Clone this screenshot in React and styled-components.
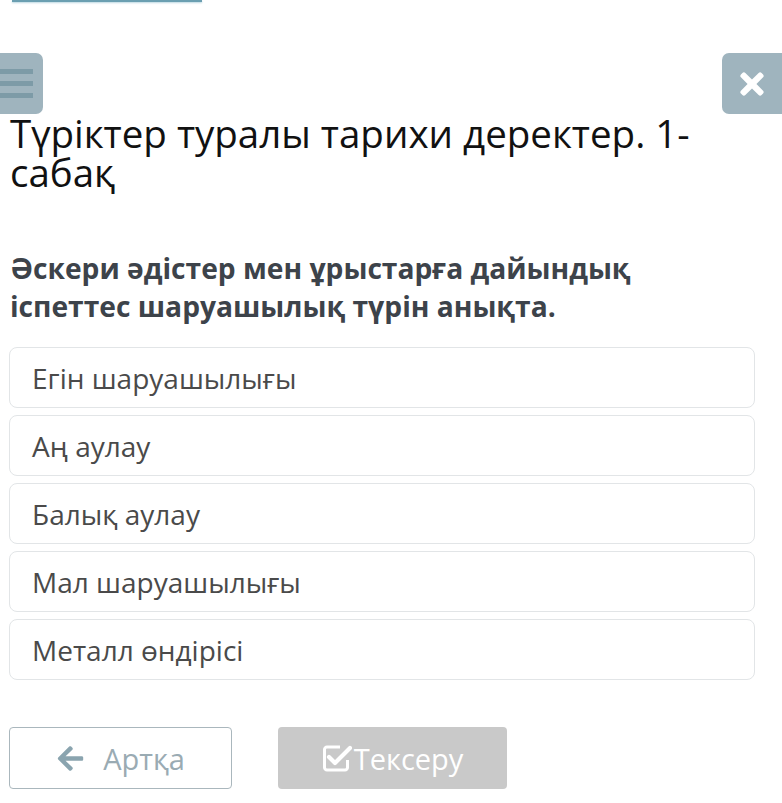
import React from 'react'
import styled, { createGlobalStyle } from 'styled-components'
import { FaArrowLeft, FaTimes } from 'react-icons/fa'

const GlobalStyle = createGlobalStyle`
  html, body {
    margin: 0;
    padding: 0;
    background: #fff;
  }
  body {
    font-family: 'Open Sans', 'Noto Sans', sans-serif;
  }
`

const Page = styled.div`
  width: 782px;
  height: 803px;
  overflow: hidden;
  padding: 0 27px 0 9px;
  box-sizing: border-box;
`

const Progress = styled.div`
  width: 190px;
  height: 2px;
  margin-left: 3px;
  background: #6b9fb1;
  box-shadow: 0 1px 2px #b9d6e0;
`

const Toolbar = styled.div`
  display: flex;
  justify-content: space-between;
  margin: 51px -27px 0 -9px;
`

const SquareButton = styled.div`
  width: ${p => p.$w}px;
  height: 61px;
  background: #9fb4be;
  border-radius: ${p => p.$left ? '0 7px 7px 0' : '7px 0 0 7px'};
  display: flex;
  align-items: center;
  justify-content: ${p => p.$left ? 'flex-start' : 'center'};
  color: #fff;
`

const Bars = styled.div`
  display: flex;
  flex-direction: column;
  gap: 7px;
  width: 33px;
  span {
    display: block;
    height: 5px;
    background: #7d9ba7;
  }
`

const Title = styled.h1`
  margin: 0;
  padding-left: 1px;
  font-size: 38.5px;
  line-height: 39px;
  font-weight: 400;
  color: #111;
`

const Question = styled.h2`
  margin: 57px 0 22px;
  padding-left: 1px;
  max-width: 680px;
  font-size: 28.2px;
  line-height: 38px;
  font-weight: 700;
  color: #3d434a;
`

const Options = styled.div`
  display: flex;
  flex-direction: column;
  gap: 7px;
`

const Option = styled.div`
  height: 61px;
  box-sizing: border-box;
  border: 1px solid #e2e5e7;
  border-radius: 8px;
  padding-left: 22px;
  display: flex;
  align-items: center;
  font-size: 28px;
  color: #4a4a4a;
`

const Actions = styled.div`
  display: flex;
  gap: 46px;
  margin-top: 47px;
`

const Button = styled.div`
  width: ${p => p.$w}px;
  height: 62px;
  box-sizing: border-box;
  border-radius: 4px;
  display: flex;
  align-items: center;
  justify-content: center;
  gap: ${p => p.$gap}px;
  font-size: 29px;
  ${p => p.$ghost
    ? 'border: 1px solid #aab7bd; color: #9aabb3; background: #fff;'
    : 'background: #c9c9c9; color: #fff;'}
  svg.arrow {
    color: #8aa4af;
  }
`

const CheckIcon = () => (
  <svg width='30' height='28' viewBox='0 0 30 28' fill='none' stroke='#fff'>
    <path d='M18 3H5a2.5 2.5 0 0 0-2.5 2.5v18A2.5 2.5 0 0 0 5 26h18a2.5 2.5 0 0 0 2.5-2.5V16' strokeWidth='3' />
    <path d='M7 13l6 6L28 4' strokeWidth='4.2' strokeLinecap='round' strokeLinejoin='round' />
  </svg>
)

const options = [
  'Егін шаруашылығы',
  'Аң аулау',
  'Балық аулау',
  'Мал шаруашылығы',
  'Металл өндірісі'
]

const App = () => (
  <>
    <GlobalStyle />
    <Page>
      <Progress />
      <Toolbar>
        <SquareButton $left $w={43}>
          <Bars><span /><span /><span /></Bars>
        </SquareButton>
        <SquareButton $w={60}>
          <FaTimes size={34} />
        </SquareButton>
      </Toolbar>
      <Title>Түріктер туралы тарихи деректер. 1-сабақ</Title>
      <Question>Әскери әдістер мен ұрыстарға дайындық іспеттес шаруашылық түрін анықта.</Question>
      <Options>
        {options.map(o => <Option key={o}>{o}</Option>)}
      </Options>
      <Actions>
        <Button $ghost $w={223} $gap={18}>
          <FaArrowLeft className='arrow' size={29} />
          Артқа
        </Button>
        <Button $w={229} $gap={2}>
          <CheckIcon />
          Тексеру
        </Button>
      </Actions>
    </Page>
  </>
)

export default App
